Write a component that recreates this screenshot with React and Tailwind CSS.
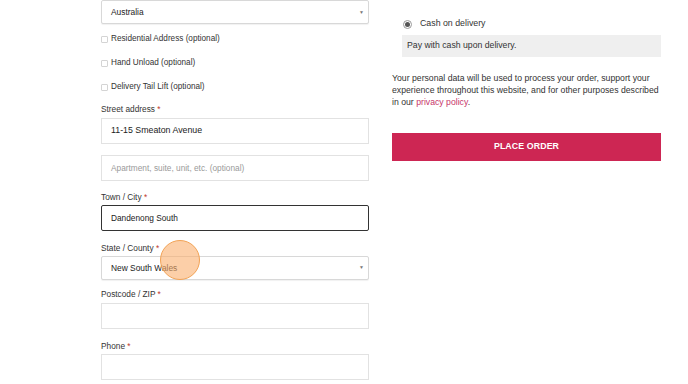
import React from "react";

const font = { fontFamily: '"Liberation Sans", Arial, sans-serif' };

function Label({ text, className = "" }) {
  return (
    <div className={"h-[12px] leading-[12px] text-[8.3px] text-[#333] " + className}>
      {text} <span className="text-[#c0392b]">*</span>
    </div>
  );
}

function Input({ value, placeholder, className = "", focused = false, size = "text-[8.3px]" }) {
  return (
    <div
      className={
        "h-[26px] flex items-center px-[9px] bg-white " +
        size +
        " " +
        (focused
          ? "border-[1.5px] border-[#333] rounded-[2px] "
          : "border border-[#e2e2e2] ") +
        className
      }
    >
      {value ? (
        <span className="text-[#222]">{value}</span>
      ) : (
        <span className="text-[#9a9a9a]">{placeholder}</span>
      )}
    </div>
  );
}

function Select({ value, className = "" }) {
  return (
    <div
      className={
        "h-[24px] flex items-center justify-between pl-[9px] pr-[4px] text-[8.4px] text-[#222] bg-white border border-[#d8d8d8] rounded-[2px] shadow-[0_1px_1px_rgba(0,0,0,0.06)] " +
        className
      }
    >
      <span>{value}</span>
      <span className="text-[5px] text-[#777]">▼</span>
    </div>
  );
}

function Check({ text }) {
  return (
    <div className="h-[24px] pt-[1px] flex items-center text-[8.2px] text-[#333]">
      <span className="w-[7px] h-[7px] border border-[#d4d4d4] rounded-[1px] bg-white mr-[3px]"></span>
      {text}
    </div>
  );
}

export default function App() {
  return (
    <div className="w-[688px] h-[384px] bg-white overflow-hidden relative" style={font}>
      <div className="flex">
        <div className="ml-[101px] w-[268px] flex flex-col">
          <Select value="Australia" className="pt-[1px]" />
          <div className="mt-[3px]">
            <Check text="Residential Address (optional)" />
            <Check text="Hand Unload (optional)" />
            <Check text="Delivery Tail Lift (optional)" />
          </div>
          <Label text="Street address" className="mt-[4px]" />
          <Input value="11-15 Smeaton Avenue" size="text-[8.8px]" className="mt-[3px]" />
          <Input placeholder="Apartment, suite, unit, etc. (optional)" className="mt-[11px]" />
          <Label text="Town / City" className="mt-[10px]" />
          <Input value="Dandenong South" focused className="mt-[2px]" />
          <Label text="State / County" className="mt-[11px]" />
          <Select value="New South Wales" className="mt-[2px]" />
          <Label text="Postcode / ZIP" className="mt-[8px]" />
          <Input className="mt-[3px]" />
          <Label text="Phone" className="mt-[11px]" />
          <Input className="mt-[2px]" />
        </div>
        <div className="ml-[23px] w-[269px] flex flex-col">
          <div className="mt-[18px] h-[12px] flex items-center pl-[11px]">
            <span className="w-[9px] h-[9px] rounded-full border border-[#999] flex items-center justify-center">
              <span className="w-[5px] h-[5px] rounded-full bg-[#555]"></span>
            </span>
            <span className="ml-[8px] text-[8.8px] text-[#333]">Cash on delivery</span>
          </div>
          <div className="mt-[5px] ml-[10px] h-[22px] bg-[#efefef] flex items-center pl-[5px] text-[8.7px] text-[#333]">
            Pay with cash upon delivery.
          </div>
          <p className="mt-[14px] pt-[1px] text-[8.7px] leading-[12px] text-[#333]">
            Your personal data will be used to process your order, support your experience throughout this website, and for other purposes described in our <span className="text-[#c7356a]">privacy policy</span>.
          </p>
          <div className="mt-[25px] h-[28px] bg-[#cd2653] flex items-center justify-center text-white font-bold text-[8.8px] tracking-[0.1px]">
            PLACE ORDER
          </div>
        </div>
      </div>
      <div className="absolute left-[160px] top-[240px] w-[40px] h-[40px] rounded-full bg-[rgba(250,175,110,0.6)] border border-[#f2a356]"></div>
    </div>
  );
}
